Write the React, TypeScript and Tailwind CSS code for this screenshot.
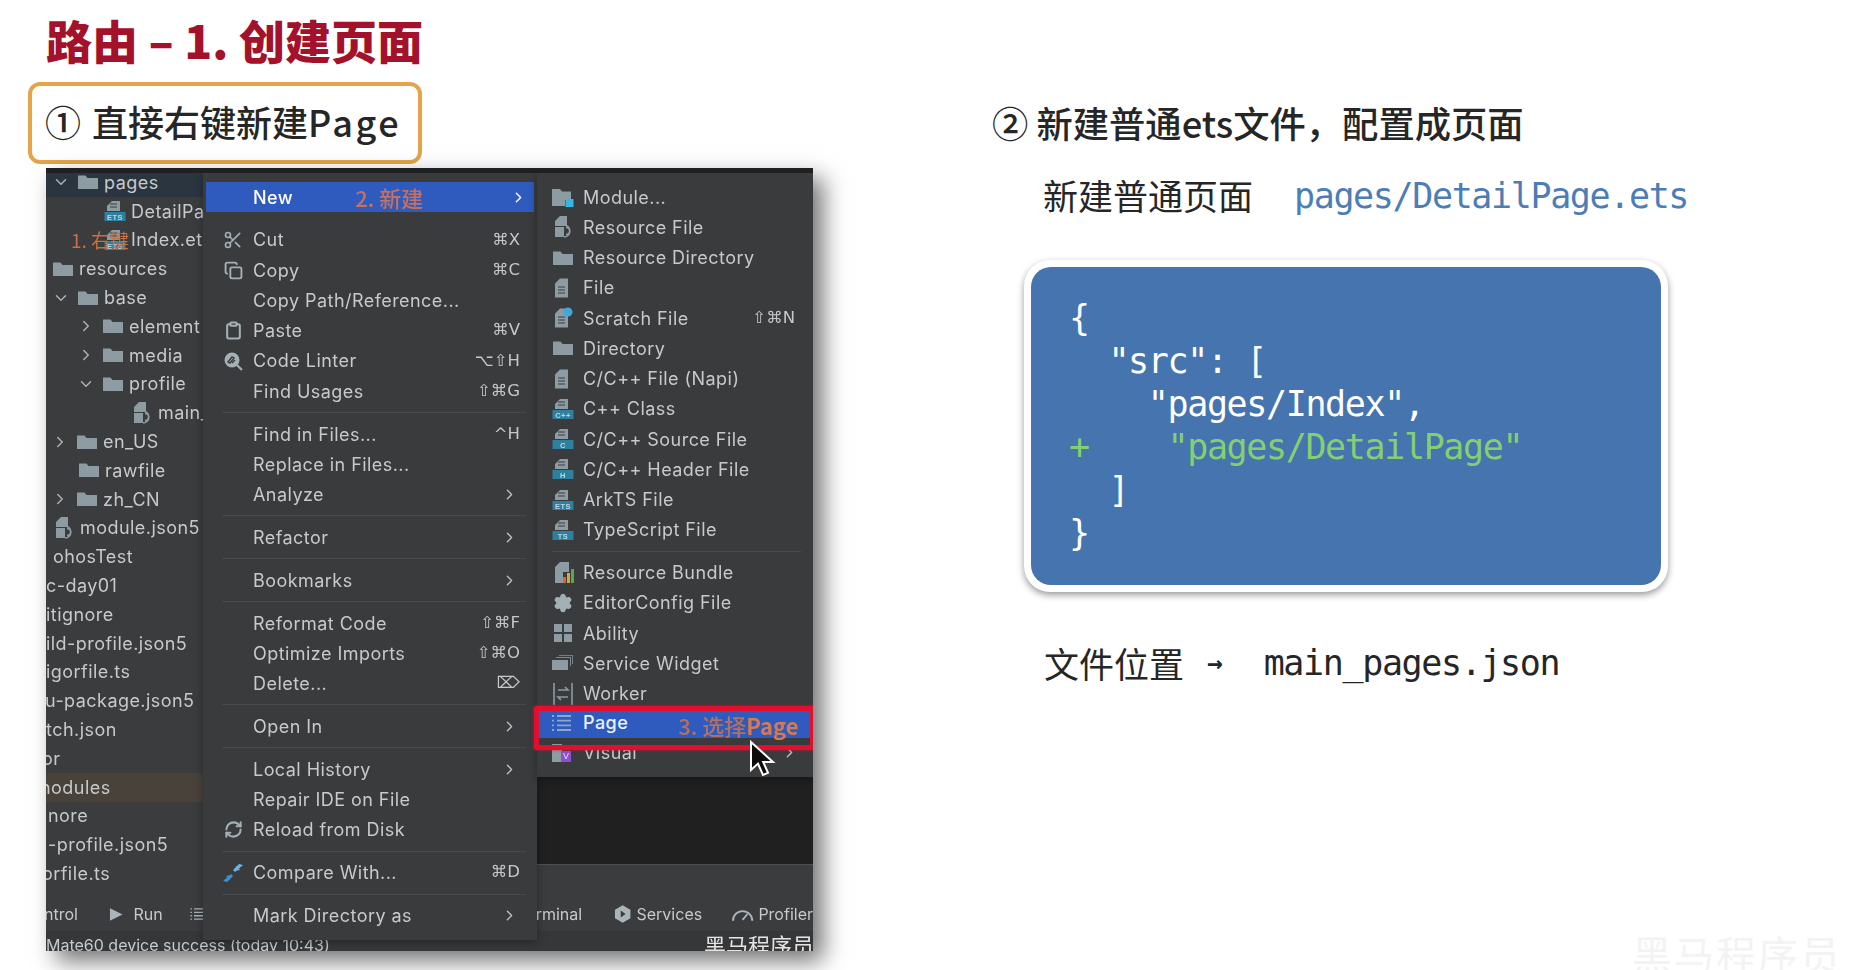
import React from "react";
import {
  ChevronDown,
  ChevronRight,
  Copy,
  Clipboard,
  RefreshCw,
  Scissors,
  Settings,
} from "lucide-react";

const grey = "#8d9ca3";

const Folder = ({ size = 22 }: { size?: number }) => (
  <svg width={size} height={size} viewBox="0 0 22 22" className="shrink-0">
    <path d="M1 4.500h7.500l2 2.500H21v11H1z" fill={grey} />
  </svg>
);

const BandFile = ({ band = "#2f7f9f", label = "" }: { band?: string; label?: string }) => (
  <svg width={22} height={22} viewBox="0 0 22 22" className="shrink-0">
    <path d="M8 1h8v10H3V6z" fill={grey} />
    <path d="M6 4h7M6 7h7" stroke="#3a3c3e" strokeWidth="1" />
    <rect x="0.5" y="12" width="21" height="9" fill={band} />
    <text x="11" y="19.500" textAnchor="middle" fontSize="7.500" fontWeight="700" fill="#b6d8e6" fontFamily="Liberation Sans, sans-serif">
      {label}
    </text>
  </svg>
);

const JsonFile = () => (
  <svg width={22} height={24} viewBox="0 0 22 24" className="shrink-0">
    <path d="M8 1h7v10H3V6z" fill={grey} />
    <path d="M3 12h9v10H3z" fill={grey} />
    <path d="M12 10a5.500 5.500 0 0 1 0 12M14 12.500a3.500 3.500 0 0 1 0 7M10.500 13a4 4 0 0 0 0 6" fill="none" stroke={grey} strokeWidth="1.400" />
  </svg>
);

const PlainFile = ({ badge }: { badge?: "scratch" | "c" }) => (
  <svg width={22} height={22} viewBox="0 0 22 22" className="shrink-0">
    <path d="M8 1.500h8v19H3V6.500z" fill={grey} />
    <path d="M6 10h7M6 13h7M6 16h7" stroke="#3a3c3e" strokeWidth="1" />
    {badge === "scratch" && <circle cx="16" cy="5" r="4.500" fill="#3fa7dc" />}
  </svg>
);

const ModuleIcon = () => (
  <svg width={24} height={22} viewBox="0 0 24 22" className="shrink-0">
    <path d="M1 3h8l2 2.500h9V14H14v6H1z" fill={grey} />
    <rect x="14.500" y="13" width="8" height="8" fill="#35b6e8" />
  </svg>
);

const BundleIcon = () => (
  <svg width={24} height={24} viewBox="0 0 24 24" className="shrink-0">
    <path d="M9 1h9v10h-6v11H4V6z" fill={grey} />
    <rect x="12" y="16" width="3" height="6" fill="#d9633a" />
    <rect x="16" y="12" width="3" height="10" fill="#d9a83a" />
    <rect x="20" y="8" width="3" height="14" fill="#5fa84a" />
  </svg>
);

const AbilityIcon = () => (
  <svg width={22} height={22} viewBox="0 0 22 22" className="shrink-0" fill={grey}>
    <rect x="2" y="2" width="8" height="8" />
    <rect x="12" y="2" width="8" height="8" />
    <rect x="2" y="12" width="8" height="8" />
    <rect x="12" y="12" width="8" height="8" />
  </svg>
);

const WidgetIcon = () => (
  <svg width={24} height={22} viewBox="0 0 24 22" className="shrink-0" fill={grey}>
    <path d="M8 3h14v9h-1V4H8z" opacity="0.7" />
    <path d="M5 5h15v9h-1V6H5z" opacity="0.8" />
    <path d="M1 8h16v10H1z" />
  </svg>
);

const WorkerIcon = () => (
  <svg width={22} height={24} viewBox="0 0 22 24" className="shrink-0" fill="none" stroke={grey} strokeWidth="1.600">
    <path d="M2 1v22M20 1v22M6 8h10l-3-3M16 15H6l3 3" />
  </svg>
);

const ListIcon = ({ size = 22, color = "#8ea6c9" }: { size?: number; color?: string }) => (
  <svg width={size} height={size} viewBox="0 0 22 22" className="shrink-0" stroke={color} strokeWidth="1.800">
    <path d="M7 4h14M7 8.700h14M7 13.400h14M7 18h14" />
    <path d="M2 4h2M2 8.700h2M2 13.400h2M2 18h2" />
  </svg>
);

const VisualIcon = () => (
  <svg width={22} height={22} viewBox="0 0 22 22" className="shrink-0">
    <rect x="2" y="2" width="10" height="18" fill={grey} />
    <rect x="11" y="9" width="10" height="11" fill="#8d4fd0" />
    <path d="M13.500 11l2.500 6 2.500-6" fill="none" stroke="#e3d0f5" strokeWidth="1" />
  </svg>
);

const LinterIcon = () => (
  <svg width={20} height={20} viewBox="0 0 20 20" className="shrink-0" fill="none">
    <circle cx="9" cy="9" r="7.500" fill="#a3b0b6" />
    <path d="M14 14l5 5" stroke="#a3b0b6" strokeWidth="2.200" />
    <path d="M5 11l4-5 2 1-4 5zM9 12l3-3" stroke="#3a3c3e" strokeWidth="1.400" />
  </svg>
);

const CompareIcon = () => (
  <svg width={22} height={22} viewBox="0 0 22 22" className="shrink-0">
    <path d="M1 19l8-7 2 2-6 6zM4 14l5-1-1 5z" fill="#3d8fd0" />
    <path d="M21 3l-8 7-2-2 6-6zM18 8l-5 1 1-5z" fill="#6fb4e6" />
  </svg>
);

const Cursor = () => (
  <svg width={28} height={38} viewBox="0 0 14 19">
    <path d="M1 1v14l3.500-3.200L7 17.500l2.500-1.100-2.400-5.400H12z" fill="#0c0c0c" stroke="#fff" strokeWidth="1" />
  </svg>
);

type TreeRow = {
  text: string;
  x: number;
  icon?: "folder" | "json" | "ets";
  chevron?: "down" | "right";
  bg?: string;
};

const treeRows: TreeRow[] = [
  { text: "pages", x: 10, icon: "folder", chevron: "down", bg: "bg-[#2a3540]" },
  { text: "DetailPage.ets", x: 58, icon: "ets" },
  { text: "Index.ets", x: 58, icon: "ets" },
  { text: "resources", x: 6, icon: "folder" },
  { text: "base", x: 10, icon: "folder", chevron: "down" },
  { text: "element", x: 35, icon: "folder", chevron: "right" },
  { text: "media", x: 35, icon: "folder", chevron: "right" },
  { text: "profile", x: 35, icon: "folder", chevron: "down" },
  { text: "main_pages.json", x: 85, icon: "json" },
  { text: "en_US", x: 9, icon: "folder", chevron: "right" },
  { text: "rawfile", x: 32, icon: "folder" },
  { text: "zh_CN", x: 9, icon: "folder", chevron: "right" },
  { text: "module.json5", x: 7, icon: "json" },
  { text: "ohosTest", x: 7 },
  { text: "c-day01", x: 0 },
  { text: "itignore", x: 0 },
  { text: "ild-profile.json5", x: 0 },
  { text: "igorfile.ts", x: 0 },
  { text: "u-package.json5", x: -1 },
  { text: "tch.json", x: 0 },
  { text: "or", x: -4 },
  { text: "nodules", x: -6, bg: "bg-[#48423a]" },
  { text: "nore", x: 2 },
  { text: "-profile.json5", x: 2 },
  { text: "orfile.ts", x: -4 },
];

const TreeItem = ({ row }: { row: TreeRow }) => {
  return (
    <div className={`flex h-[28.8px] items-center whitespace-nowrap overflow-hidden ${row.bg ?? ""}`} style={{ paddingLeft: Math.max(row.x, 0) }}>
      {row.chevron === "down" && <ChevronDown size={18} color="#a8b2b8" className="shrink-0 -ml-1 mr-[7px]" />}
      {row.chevron === "right" && <ChevronRight size={18} color="#a8b2b8" className="shrink-0 -ml-1 mr-[7px]" />}
      {row.icon === "folder" && <Folder />}
      {row.icon === "ets" && <BandFile label="ETS" />}
      {row.icon === "json" && <JsonFile />}
      <span className={row.icon ? "ml-[5px]" : ""} style={{ marginLeft: row.x < 0 ? row.x : undefined }}>{row.text}</span>
    </div>
  );
};

type MenuRow = {
  label?: string;
  icon?: React.ReactNode;
  keys?: string;
  more?: boolean;
};

const sep: MenuRow = {};

const mainRows: MenuRow[] = [
  { label: "Cut", icon: <Scissors size={20} color="#a3b0b6" />, keys: "⌘X" },
  { label: "Copy", icon: <Copy size={19} color="#a3b0b6" strokeWidth={2.4} />, keys: "⌘C" },
  { label: "Copy Path/Reference..." },
  { label: "Paste", icon: <Clipboard size={19} color="#a3b0b6" strokeWidth={2.6} />, keys: "⌘V" },
  { label: "Code Linter", icon: <LinterIcon />, keys: "⌥⇧H" },
  { label: "Find Usages", keys: "⇧⌘G" },
  sep,
  { label: "Find in Files...", keys: "^H" },
  { label: "Replace in Files..." },
  { label: "Analyze", more: true },
  sep,
  { label: "Refactor", more: true },
  sep,
  { label: "Bookmarks", more: true },
  sep,
  { label: "Reformat Code", keys: "⇧⌘F" },
  { label: "Optimize Imports", keys: "⇧⌘O" },
  { label: "Delete...", keys: "⌦" },
  sep,
  { label: "Open In", more: true },
  sep,
  { label: "Local History", more: true },
  { label: "Repair IDE on File" },
  { label: "Reload from Disk", icon: <RefreshCw size={19} color="#a3b0b6" strokeWidth={2.6} /> },
  sep,
  { label: "Compare With...", icon: <CompareIcon />, keys: "⌘D" },
  sep,
  { label: "Mark Directory as", more: true },
];

const subRows: MenuRow[] = [
  { label: "Module...", icon: <ModuleIcon /> },
  { label: "Resource File", icon: <JsonFile /> },
  { label: "Resource Directory", icon: <Folder /> },
  { label: "File", icon: <PlainFile /> },
  { label: "Scratch File", icon: <PlainFile badge="scratch" />, keys: "⇧⌘N" },
  { label: "Directory", icon: <Folder /> },
  { label: "C/C++ File (Napi)", icon: <PlainFile /> },
  { label: "C++ Class", icon: <BandFile label="C++" /> },
  { label: "C/C++ Source File", icon: <BandFile label="C" /> },
  { label: "C/C++ Header File", icon: <BandFile label="H" /> },
  { label: "ArkTS File", icon: <BandFile label="ETS" /> },
  { label: "TypeScript File", icon: <BandFile label="TS" /> },
  sep,
  { label: "Resource Bundle", icon: <BundleIcon /> },
  { label: "EditorConfig File", icon: <Settings size={20} color="#a3b0b6" fill="#a3b0b6" /> },
  { label: "Ability", icon: <AbilityIcon /> },
  { label: "Service Widget", icon: <WidgetIcon /> },
  { label: "Worker", icon: <WorkerIcon /> },
];

const MenuList = ({ rows, textLeft, rightPad }: { rows: MenuRow[]; textLeft: number; rightPad: number }) => (
  <>
    {rows.map((row, i) =>
      row.label ? (
        <div key={i} className="relative flex h-[30.25px] items-center" style={{ paddingLeft: textLeft, paddingRight: rightPad }}>
          {row.icon && (
            <span className="absolute flex w-[26px] justify-center" style={{ left: textLeft - 33 }}>
              {row.icon}
            </span>
          )}
          <span className="flex-1">{row.label}</span>
          {row.keys && <span className="text-[#c4c8ca] font-['DejaVu_Sans',sans-serif] text-[16.5px] tracking-normal">{row.keys}</span>}
          {row.more && <ChevronRight size={17} color="#b8bec2" className="mr-[2px]" />}
        </div>
      ) : (
        <div key={i} className="flex h-[12.6px] items-center" style={{ paddingLeft: textLeft - 31, paddingRight: rightPad - 6 }}>
          <div className="h-px w-full bg-[#48494b]" />
        </div>
      ),
    )}
  </>
);

const Panel = () => (
  <div className="relative ml-[18px] mt-1 flex h-[783px] w-[767px] flex-col overflow-hidden bg-[#3a3c3e] shadow-[10px_10px_22px_rgba(0,0,0,0.55)] blur-[0.5px] font-['Inter',sans-serif] text-[18px] tracking-[0.45px] text-[#c6cacc]">
    <div className="relative z-10 h-[5px] shrink-0 bg-[#1f2021]" />
    <div className="-mt-[5px] flex min-h-0 flex-1">
      <div className="w-[157px] shrink-0 overflow-hidden">
        {treeRows.map((row) => (
          <TreeItem key={row.text} row={row} />
        ))}
      </div>
      <div className="flex flex-1 flex-col">
        <div className="h-[608px] shrink-0" />
        <div className="h-[88px] shrink-0 bg-[#202021]" />
        <div className="h-px shrink-0 bg-[#4d4f50]" />
      </div>
    </div>
    <div className="flex h-[34px] shrink-0 items-center text-[16px] tracking-normal">
      <span className="ml-[-2px]">ntrol</span>
      <svg width="15" height="15" viewBox="0 0 15 15" className="ml-[31px]"><path d="M1 1l13 6.500L1 14z" fill="#aab4b9" /></svg>
      <span className="ml-[10px]">Run</span>
      <span className="ml-[26px]"><ListIcon size={16} color="#aab4b9" /></span>
      <span className="ml-[331px]">rminal</span>
      <svg width="20" height="20" viewBox="0 0 20 20" className="ml-[31px]"><path d="M10 1l8 4.500v9L10 19l-8-4.500v-9z" fill="#aab4b9" /><path d="M8 6.500l5 3.500-5 3.500z" fill="#3a3c3e" /></svg>
      <span className="ml-1">Services</span>
      <svg width="24" height="16" viewBox="0 0 24 16" className="ml-[29px]" fill="none" stroke="#aab4b9" strokeWidth="2"><path d="M2 15a10 10 0 0 1 20 0M12 14l5-6" /></svg>
      <span className="ml-1 whitespace-nowrap">Profiler</span>
    </div>
    <div className="flex h-[20px] shrink-0 items-end justify-between overflow-hidden bg-[#353739] text-[16px] tracking-normal leading-[20px]">
      <span className="translate-y-[4px]">Mate60 device success (today 10:43)</span>
      <span className="mr-[-1px] translate-y-[3px] font-['Noto_Sans_CJK_SC',sans-serif] text-[22px] text-[#e3e3e3]">黑马程序员</span>
    </div>

    {/* step 1 note over the tree */}
    <div className="absolute left-[25px] top-[58px] font-['Noto_Sans_CJK_SC',sans-serif] text-[19px] tracking-normal text-[#c8703f]">1. 右键</div>

    {/* context menu */}
    <div className="absolute left-[157px] top-[5px] h-[767px] w-[334px] bg-[#3a3b3d] pt-[9px] shadow-[0_2px_8px_rgba(0,0,0,0.35)]">
      <div className="relative mx-[3px] flex h-[30.3px] items-center bg-[#2e5bbd] pl-[47px] pr-1 font-medium text-white">
        <span>New</span>
        <span className="ml-[62px] font-['Noto_Sans_CJK_SC',sans-serif] text-[22px] tracking-normal text-[#c8705f]">2. 新建</span>
        <ChevronRight size={17} color="#fff" className="ml-auto mr-[3px]" />
      </div>
      <div className="h-[12.5px]" />
      <MenuList rows={mainRows} textLeft={50} rightPad={17} />
    </div>

    {/* new submenu */}
    <div className="absolute left-[491px] top-[5px] h-[604px] w-[276px] bg-[#3a3b3d] pt-[9px] shadow-[0_2px_8px_rgba(0,0,0,0.35)]">
      <MenuList rows={subRows} textLeft={46} rightPad={18} />
      <div className="relative -mt-px flex h-[30px] items-center bg-[#2e5bbd] pl-[46px] font-medium text-[#e8f2ff]">
        <span className="absolute left-[13px]"><ListIcon /></span>
        <span>Page</span>
        <span className="ml-[50px] translate-y-[3px] font-['Noto_Sans_CJK_SC',sans-serif] text-[22px] tracking-normal text-[#b5705f]">
          3. 选择<span className="font-bold text-[#d9794f]">Page</span>
        </span>
      </div>
      <div className="relative flex h-[30px] items-center pl-[46px]">
        <span className="absolute left-[13px]"><VisualIcon /></span>
        <span>Visual</span>
        <ChevronRight size={17} color="#b8bec2" className="absolute right-[15px]" />
      </div>
    </div>

    {/* red annotation round the Page item */}
    <div className="absolute left-[488px] top-[538px] h-[44px] w-[281px] rounded-[2px] border-[5px] border-[#e0102e] shadow-[0_0_3px_#e0102e]" />
    <div className="absolute left-[703px] top-[572px]"><Cursor /></div>
  </div>
);

const codeLines = [`{`, `  "src": [`, `    "pages/Index",`];

const mono = "font-['DejaVu_Sans_Mono',monospace] text-[35px] tracking-[-1.37px]";

export default function App() {
  return (
    <div className="relative flex h-[970px] w-[1856px] overflow-hidden bg-white font-['Noto_Sans_CJK_SC',sans-serif] text-[#262626]">
      <div className="ml-7 w-[785px] shrink-0">
        <h1 className="ml-[18px] flex h-[82px] items-center pb-1 text-[46px] font-black text-[#a3112a]">路由 – 1. 创建页面</h1>
        <div className="flex h-[82px] w-[394px] items-center rounded-[12px] border-[4px] border-[#e5a34a] bg-white pb-1 pl-[13px] text-[36px] font-medium">
          <span>①<span className="ml-[11px]">直接右键新建</span><span className="tracking-[2.5px]">Page</span></span>
        </div>
        <Panel />
      </div>

      <div className="ml-[179px] pt-[98px]">
        <div className="flex h-12 items-center text-[36.3px] font-medium whitespace-nowrap">② 新建普通ets文件，配置成页面</div>
        <div className="ml-[51px] mt-[25px] flex h-12 items-center whitespace-nowrap text-[35px]">
          <span>新建普通页面</span>
          <span className={`ml-[41px] translate-y-[1px] text-[#4d7db5] ${mono}`}>pages/DetailPage.ets</span>
        </div>
        <div className="ml-[32px] mt-[41px] w-[644px] rounded-[26px] bg-white p-[7px] shadow-[0_3px_7px_rgba(0,0,0,0.4)]">
          <div className={`h-[318px] rounded-[20px] bg-[#4574ae] pl-[38px] pt-[30px] leading-[43px] whitespace-pre text-white ${mono}`}>
            {codeLines.map((line) => (
              <div key={line}>{line}</div>
            ))}
            <div className="text-[#84d070]">{`+    "pages/DetailPage"`}</div>
            <div>{`  ]`}</div>
            <div>{`}`}</div>
          </div>
        </div>
        <div className="ml-[52px] mt-[47px] flex h-12 items-center whitespace-nowrap text-[35px]">
          <span>文件位置</span>
          <span className="ml-[23px] font-['DejaVu_Sans_Mono',monospace] text-[26px] font-bold">→</span>
          <span className={`ml-[41px] ${mono}`}>main_pages.json</span>
        </div>
      </div>

      {/* faint watermark */}
      <div className="absolute bottom-[-13px] right-[14px] text-[40px] tracking-[2px] text-[#f3f3f3]">黑马程序员</div>
    </div>
  );
}
